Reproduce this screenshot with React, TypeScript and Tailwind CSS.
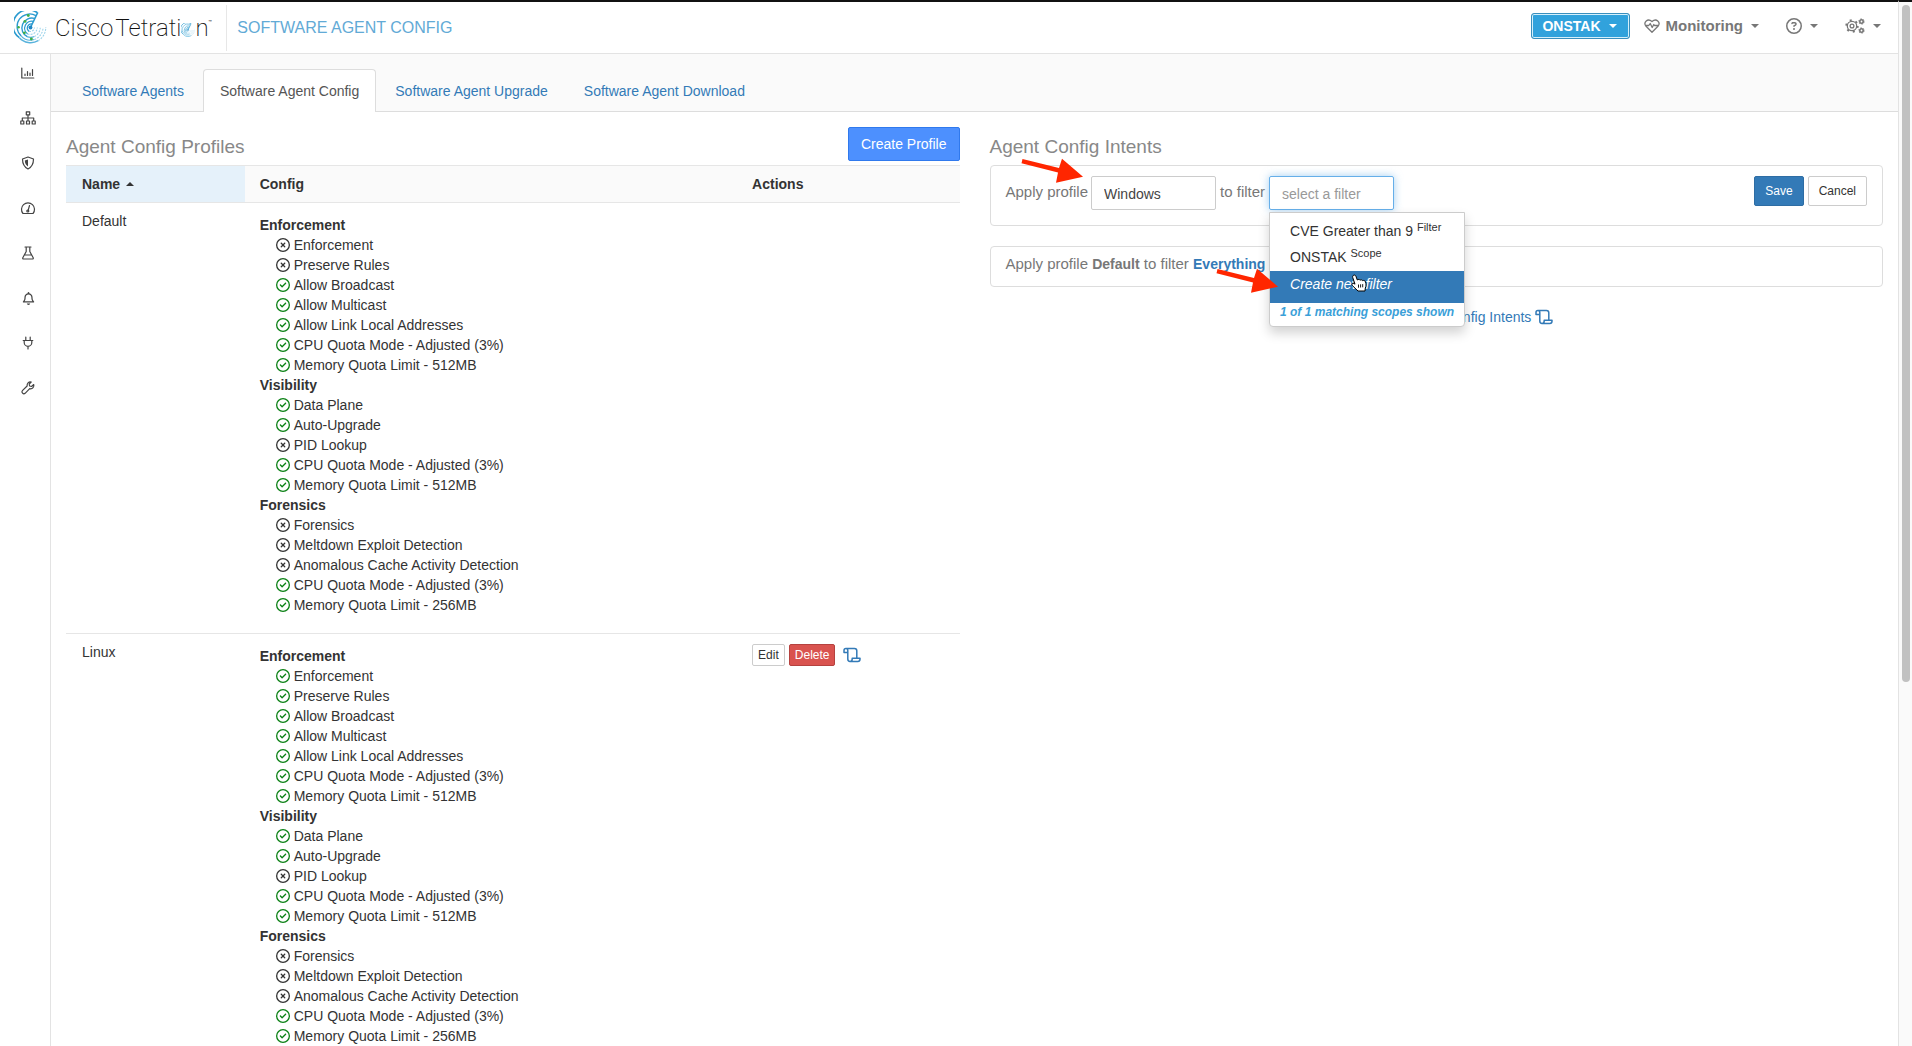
import React from "react";
import { FaRegBell, FaRegCircleCheck, FaRegCircleQuestion, FaRegCircleXmark } from "react-icons/fa6";

type IconProps = { className?: string; children: React.ReactNode; box?: string; width?: number };

function Line({ className, children, box = "0 0 16 16", width = 1.2 }: IconProps) {
  return (
    <svg
      viewBox={box}
      className={className}
      fill="none"
      stroke="currentColor"
      strokeWidth={width}
      strokeLinecap="round"
      strokeLinejoin="round"
      aria-hidden="true"
    >
      {children}
    </svg>
  );
}

function Caret({ up = false }: { up?: boolean }) {
  return (
    <svg viewBox="0 0 8 4" className="h-1 w-2 shrink-0" fill="currentColor" aria-hidden="true">
      <path d={up ? "M0 4 4 0l4 4z" : "M0 0h8L4 4z"} />
    </svg>
  );
}

function Scroll() {
  return (
    <Line box="0 0 18 16" className="h-4 w-[18px] shrink-0" width={1.5}>
      <path d="M4.800 5.500H1V3.600C1 2.300 1.800 1.500 2.900 1.500s1.900.9 1.900 2.100v8.400c0 1.400.8 2.400 2.200 2.400s2.200-1 2.200-2.400v-.7H17v.9c0 1.300-.9 2.200-2.200 2.200H7M2.900 1.500h8.600c1.400 0 2.300 1 2.300 2.300v7.200" />
    </Line>
  );
}

function Spiral({ className, dots = false }: { className: string; dots?: boolean }) {
  return (
    <svg viewBox="0 0 34 34" className={className} fill="none" aria-hidden="true">
      <g stroke="#2b9bd0">
        <path d="M24 1.700A15.800 15.800 0 0 0 5.500 27.500" strokeWidth="1.700" />
        <path d="M22.600 4.800A13 13 0 0 0 7.500 25.800" strokeWidth="1.300" />
        <path d="M21.300 7.700A10.200 10.200 0 0 0 14 26.700" strokeWidth="1.400" />
        <path d="M20 10.600A7.300 7.300 0 0 0 14 23.600" strokeWidth="1.300" />
        <path d="M18.800 13.300A4.300 4.300 0 0 0 15.500 21" strokeWidth="1.300" />
        <path d="M24.500 1.500 17 17" strokeWidth="1.600" />
      </g>
      <g stroke="#58b2dc">
        <path d="M5.500 27.500A15.800 15.800 0 0 0 25 30.600" strokeWidth="1.500" />
        <path d="M7.500 25.800A13 13 0 0 0 21 29.300" strokeWidth="1.100" />
        <path d="M14 26.700A10.200 10.200 0 0 0 21 26.300" strokeWidth="1.200" />
      </g>
      <g stroke="#9bd3ea" strokeWidth="1.100" strokeDasharray="2 1.200">
        <path d="M25 30.600a15.800 15.800 0 0 0 7.700-14" />
        <path d="M21 29.300a13 13 0 0 0 8.900-12" />
        <path d="M21 26.300a10.200 10.200 0 0 0 6-9" />
        <path d="M14 23.600a7.300 7.300 0 0 0 10-6.500" />
        <path d="M15.500 21a4.300 4.300 0 0 0 5.500-4" />
      </g>
      <circle cx="17" cy="17" r="2" fill="#1f86c4" />
      {dots && (
        <g fill="#3fae49">
          <circle cx="14.700" cy="4.700" r="1.500" />
          <circle cx="11.300" cy="10.700" r="1.500" />
          <circle cx="4.700" cy="16.700" r="1.300" />
          <circle cx="10.700" cy="22.500" r="1.500" />
          <circle cx="17.900" cy="28.800" r="1.500" />
        </g>
      )}
    </svg>
  );
}

function Arrow({ className }: { className: string }) {
  return (
    <svg viewBox="0 0 62 26" className={className} fill="#ff2600" aria-hidden="true">
      <path d="M1.500 1 38 10l3-9.300L62 18.700l-27 6 2-10.200L.5 5.300z" />
    </svg>
  );
}

const NAV: { label: string; icon: React.ReactNode }[] = [
  {
    label: "Dashboard",
    icon: (
      <Line className="h-4 w-4">
        <path d="M1.800 3v10h12M5 10.500V9M7.500 10.500v-4M10 10.500V8M12.500 10.500V4.500" />
      </Line>
    ),
  },
  {
    label: "Application map",
    icon: (
      <Line className="h-4 w-4">
        <path d="M6.300 1.800h3.400v3H6.300zM.8 11h3v3h-3zM6.500 11h3v3h-3zM12.200 11h3v3h-3zM8 5v6M2.300 11V8h11.400v3" />
      </Line>
    ),
  },
  {
    label: "Security",
    icon: (
      <Line className="h-4 w-4">
        <path d="m8 2 5.500 2c0 5-1.500 8-5.500 10C4 12 2.500 9 2.500 4z" />
        <path d="M8 4.500 4.800 5.600c.2 2.800 1 4.600 3.200 5.900z" fill="currentColor" stroke="none" />
      </Line>
    ),
  },
  {
    label: "Performance",
    icon: (
      <Line className="h-4 w-4">
        <path d="M3 13.500a6.500 6.500 0 1 1 10 0zM8 10.800l1.500-5.300" />
        <circle cx="7.800" cy="11" r="1" />
      </Line>
    ),
  },
  {
    label: "Lab",
    icon: (
      <Line className="h-4 w-4">
        <path d="M5 2h6M6.200 2v4.500L2.800 12.800c-.3.700 0 1.200.8 1.200h8.800c.8 0 1.100-.5.8-1.200L9.800 6.500V2M5 10h6" />
      </Line>
    ),
  },
  { label: "Alerts", icon: <FaRegBell className="h-[13px] w-[13px]" /> },
  {
    label: "Connectors",
    icon: (
      <Line className="h-4 w-4">
        <path d="M5.800 2v3.500M10.200 2v3.500M3.200 5.500h9.600M4.200 5.500v2a3.800 3.800 0 0 0 7.600 0v-2M8 11.300V14" />
      </Line>
    ),
  },
  {
    label: "Maintenance",
    icon: (
      <Line className="h-4 w-4">
        <path d="M13.700 4.500 11.600 6.500 9.600 6l-.4-2 2-2C9 1.400 6.800 3 7.100 6L2.400 10.600c-1.500 1.700 1 4.200 2.700 2.700L9.700 8.700c2.900.5 4.800-1.800 4-4.200z" />
      </Line>
    ),
  },
];

type Item = [boolean, string];
type Section = { title: string; items: Item[] };

function sections(enforced: boolean): Section[] {
  return [
    {
      title: "Enforcement",
      items: [
        [enforced, "Enforcement"],
        [enforced, "Preserve Rules"],
        [true, "Allow Broadcast"],
        [true, "Allow Multicast"],
        [true, "Allow Link Local Addresses"],
        [true, "CPU Quota Mode - Adjusted (3%)"],
        [true, "Memory Quota Limit - 512MB"],
      ],
    },
    {
      title: "Visibility",
      items: [
        [true, "Data Plane"],
        [true, "Auto-Upgrade"],
        [false, "PID Lookup"],
        [true, "CPU Quota Mode - Adjusted (3%)"],
        [true, "Memory Quota Limit - 512MB"],
      ],
    },
    {
      title: "Forensics",
      items: [
        [false, "Forensics"],
        [false, "Meltdown Exploit Detection"],
        [false, "Anomalous Cache Activity Detection"],
        [true, "CPU Quota Mode - Adjusted (3%)"],
        [true, "Memory Quota Limit - 256MB"],
      ],
    },
  ];
}

function Config({ enforced }: { enforced: boolean }) {
  return (
    <div className="pt-1 pb-2.5">
      {sections(enforced).map((s) => (
        <section key={s.title}>
          <h3 className="font-bold">{s.title}</h3>
          <ul className="pl-4">
            {s.items.map(([on, text]) => (
              <li key={text} className="flex items-center gap-1">
                {on ? (
                  <FaRegCircleCheck className="h-3.5 w-3.5 text-[#0a8014]" />
                ) : (
                  <FaRegCircleXmark className="h-3.5 w-3.5" />
                )}
                {text}
              </li>
            ))}
          </ul>
        </section>
      ))}
    </div>
  );
}

function Header() {
  return (
    <header className="flex h-[54px] items-center border-t-2 border-b border-t-[#111] border-b-[#e3e3e3] bg-white">
      <a href="#home" aria-label="Cisco Tetration" className="ml-3.5 flex items-center">
        <Spiral className="h-[33px] w-[33px]" dots />
        <span className="ml-2 flex items-center font-['Roboto',sans-serif] text-2xl leading-8 font-extralight text-[#111]">
          Cisco<span className="ml-0.5">Tetrati</span>
          <Spiral className="mt-1 h-3.5 w-3.5" />
          <span>n</span>
          <span className="mb-3 text-[6px] leading-3 font-normal">™</span>
        </span>
      </a>
      <h1 className="ml-3.5 flex h-[46px] items-center border-l border-[#e7e7e7] pl-2.5 text-base text-[#62aad6]">
        SOFTWARE AGENT CONFIG
      </h1>
      <div className="mr-[17px] ml-auto flex items-center pb-1 text-[15px] font-bold text-[#777]">
        <button className="flex h-[26px] items-center gap-2 rounded-[3px] border border-[#3a8fbd] bg-[#31a2dc] px-2.5 pr-3 text-sm text-white shadow-[inset_0_0_0_1px_#d5f0fb]">
          ONSTAK <Caret />
        </button>
        <button className="ml-3.5 flex items-center gap-2">
          <Line className="-mr-1 h-4 w-4" width={1.3}>
            <path d="M8 14.200 1.800 8C-.8 4.500 3.500-.2 8 3.500 12.500-.2 16.800 4.500 14.200 8zM1.500 7.500h3.300l1.400-2 2 4 1.600-3 .7 1h4" />
          </Line>
          <span className="ml-0.5">Monitoring</span> <Caret />
        </button>
        <button aria-label="Help" className="ml-[27px] flex items-center gap-2">
          <FaRegCircleQuestion className="h-4 w-4" /> <Caret />
        </button>
        <button aria-label="Settings" className="ml-[27px] flex items-center gap-2">
          <Line box="0 0 20 16" className="h-4 w-5" width={1.3}>
            <circle cx="7" cy="8" r="1.900" />
            <circle cx="7" cy="8" r="4.700" />
            <circle cx="7" cy="8" r="5.800" strokeDasharray="2 4.070" strokeLinecap="butt" strokeWidth="1.800" />
            <circle cx="16.500" cy="3.500" r="1.700" strokeWidth="1.600" />
            <circle cx="16.500" cy="12.500" r="1.700" strokeWidth="1.600" />
            <circle cx="16.500" cy="3.500" r="2.700" strokeDasharray="1.200 1.627" strokeLinecap="butt" strokeWidth="1" />
            <circle cx="16.500" cy="12.500" r="2.700" strokeDasharray="1.200 1.627" strokeLinecap="butt" strokeWidth="1" />
          </Line>
          <Caret />
        </button>
      </div>
    </header>
  );
}

const TABS = ["Software Agents", "Software Agent Config", "Software Agent Upgrade", "Software Agent Download"];

function Tabs() {
  return (
    <nav className="flex h-[58px] items-end border-b border-[#ddd] bg-[#fafafa] pl-3.5">
      {TABS.map((t, i) => (
        <a
          key={t}
          href={"#tab" + i}
          aria-current={i === 1 ? "page" : undefined}
          className={
            i === 1
              ? "-mb-px mr-0.5 h-[43px] rounded-t border border-b-0 border-[#ddd] bg-white px-4 pt-[11px] text-[#555]"
              : "mr-0.5 h-[42px] border-x border-transparent px-4 pt-3 text-[#337ab7]"
          }
        >
          {t}
        </a>
      ))}
    </nav>
  );
}

function Profiles() {
  return (
    <section>
      <div className="flex h-[38px] items-start justify-between">
        <h2 className="pt-2 text-[19px] leading-6 font-medium text-[#888]">Agent Config Profiles</h2>
        <button className="h-[34px] rounded-xs border border-[#3079ed] bg-[#4d90fe] px-3 text-white">Create Profile</button>
      </div>
      <table className="w-full table-fixed border-collapse text-left">
        <thead>
          <tr className="h-[37px] border-y border-[#e6e6e6] bg-[#fafafa]">
            <th className="w-[20%] bg-[#e5f1fa] px-4">
              <span className="flex items-center gap-1.5">
                Name <Caret up />
              </span>
            </th>
            <th className="w-[55%] px-[15px]">Config</th>
            <th className="w-[25%] px-4">Actions</th>
          </tr>
        </thead>
        <tbody className="align-top">
          <tr className="border-b border-[#e6e6e6]">
            <td className="px-4 py-2">Default</td>
            <td className="px-[15px] py-2">
              <Config enforced={false} />
            </td>
            <td />
          </tr>
          <tr>
            <td className="px-4 py-2">Linux</td>
            <td className="px-[15px] py-2">
              <Config enforced />
            </td>
            <td className="px-4 py-2.5">
              <div className="flex items-center text-xs">
                <button className="h-[22px] rounded-xs border border-[#ccc] bg-white px-[5px]">Edit</button>
                <button className="ml-1 h-[22px] rounded-xs border border-[#b5423f] bg-[#d9534f] px-[5px] text-white">Delete</button>
                <a href="#log" aria-label="Change log" className="ml-2 text-[#337ab7]">
                  <Scroll />
                </a>
              </div>
            </td>
          </tr>
        </tbody>
      </table>
    </section>
  );
}

function FilterMenu() {
  return (
    <div className="absolute top-9 left-0 z-10 w-[196px] rounded-b border border-[#ccc] bg-white text-sm text-[#333] shadow-[0_6px_12px_rgba(0,0,0,0.18)]">
      <ul>
        <li className="flex h-[30px] items-center pt-1.5 pl-5">
          <button>CVE Greater than 9 <sup className="text-[11px]">Filter</sup></button>
        </li>
        <li className="flex h-7 items-center pl-5">
          <button>ONSTAK <sup className="text-[11px]">Scope</sup></button>
        </li>
        <li className="flex h-8 items-center bg-[#337ab7] pb-1.5 pl-5 text-white">
          <button className="italic">Create new filter</button>
        </li>
      </ul>
      <p className="h-[23px] text-center text-xs leading-[18px] font-bold text-[#3aa0d8] italic">1 of 1 matching scopes shown</p>
      <Arrow className="absolute top-[55px] -left-[54px] h-[26px] w-[62px]" />
      <svg viewBox="0 0 16 18" className="absolute top-[61px] left-[81px] h-[18px] w-4" aria-hidden="true">
        <path
          d="M2.200 1.500C3.200.6 4.500 1.100 4.900 2.200L6.300 6c.9-.9 2.300-.6 2.700.2.900-.7 2.300-.4 2.600.5 1.200-.6 2.600 0 2.900 1.200.7 2.300.8 4-.2 6.200l-.3 2.900H7L1.500 11.700C.2 10.200 1.500 8.700 3 9.400l1 .8L1.700 3.400C1.500 2.600 1.700 1.900 2.200 1.500z"
          fill="#fff"
          stroke="#000"
        />
        <path d="M7.500 10.500v3.200M9.600 10.300v3.200M11.700 10.100v3.200" stroke="#000" strokeWidth="0.900" />
      </svg>
    </div>
  );
}

function Intents() {
  return (
    <section className="text-[#777]">
      <h2 className="h-[38px] pt-2 text-[19px] leading-6 font-medium text-[#888]">Agent Config Intents</h2>
      <div className="relative flex h-[61px] items-start rounded border border-[#ddd] px-[15px] pt-2.5 text-[15px]">
        <label htmlFor="profile" className="mt-1.5 mr-[3px]">Apply profile</label>
        <input
          id="profile"
          defaultValue="Windows"
          className="h-[34px] w-[125px] rounded-xs border border-[#ccc] px-3 pt-0.5 text-sm text-[#444]"
        />
        <label htmlFor="filter" className="mx-1 mt-1.5">to filter</label>
        <div className="relative">
          <input
            id="filter"
            placeholder="select a filter"
            className="block h-[34px] w-[125px] rounded-xs border border-[#66afe9] px-3 pt-0.5 text-sm shadow-[0_0_8px_rgba(102,175,233,0.6)] placeholder:text-[#999]"
          />
          <FilterMenu />
        </div>
        <div className="ml-auto flex gap-1 text-xs">
          <button className="h-[30px] rounded-xs border border-[#2e6da4] bg-[#337ab7] px-2.5 text-white">Save</button>
          <button className="h-[30px] rounded-xs border border-[#ccc] bg-white px-2.5 text-[#333]">Cancel</button>
        </div>
        <Arrow className="absolute -top-2 left-[30px] h-[26px] w-[62px]" />
      </div>
      <p className="mt-5 h-[41px] rounded border border-[#ddd] px-[15px] pt-[7px] text-[15px]">
        Apply profile <b className="text-sm">Default</b> to filter{" "}
        <a href="#everything" className="text-sm font-bold text-[#337ab7]">Everything</a>
      </p>
      <a href="#intents-log" className="mt-5 flex items-center justify-center gap-1 text-[#337ab7]">
        View Change Log – Config Intents <Scroll />
      </a>
    </section>
  );
}

export default function App() {
  return (
    <div className="flex h-screen overflow-hidden bg-white font-['Liberation_Sans',Arial,sans-serif] text-sm leading-5 text-[#333]">
      <div className="flex min-w-0 flex-1 flex-col">
        <Header />
        <div className="flex min-h-0 flex-1">
          <nav aria-label="Main" className="flex w-[51px] shrink-0 flex-col gap-[29px] border-r border-[#e3e3e3] pt-[11px] pl-1.5 text-[#444]">
            {NAV.map((n) => (
              <a key={n.label} href={"#" + n.label} aria-label={n.label} className="flex h-4 items-center justify-center">
                {n.icon}
              </a>
            ))}
          </nav>
          <main className="min-w-0 flex-1 overflow-hidden">
            <Tabs />
            <div className="grid grid-cols-2 gap-[30px] px-[15px] pt-[15px]">
              <Profiles />
              <Intents />
            </div>
          </main>
        </div>
      </div>
      <div className="w-3.5 shrink-0 border-t-2 border-l border-t-[#111] border-l-[#e3e3e3] bg-[#fafafa] pt-[3px] pl-[3px]">
        <div className="h-[65%] w-2 rounded-full bg-[#c1c1c1]" />
      </div>
    </div>
  );
}
